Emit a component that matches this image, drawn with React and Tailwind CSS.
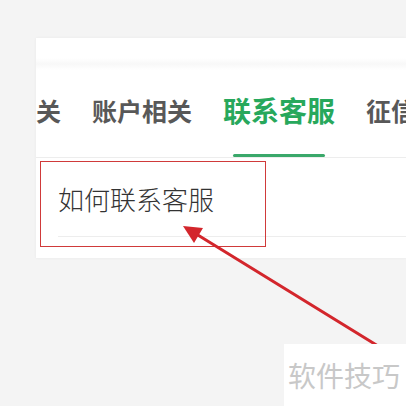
import React from 'react';

const tabs = [
  { label: '关' },
  { label: '账户相关' },
  { label: '联系客服', active: true },
  { label: '征信相关' },
];

const Tab = ({ label, active }) => (
  <div className="flex flex-col shrink-0">
    <span
      className={
        active
          ? 'text-[28px] leading-[32px] font-bold text-[#27a85c] whitespace-nowrap'
          : 'text-[25px] leading-[32px] font-semibold text-[#585858] whitespace-nowrap'
      }
    >
      {label}
    </span>
    <div className={active ? 'mt-[28px] mx-auto w-[92px] h-[3px] bg-[#3aa86a] rounded-full' : 'mt-[28px] h-[3px]'} />
  </div>
);

// annotation arrow pointing at the list item
const Arrow = () => (
  <svg className="absolute left-0 top-0 pointer-events-none" width="406" height="406" viewBox="0 0 406 406">
    <line x1="197" y1="234.5" x2="430" y2="378" stroke="#d3262c" strokeWidth="3" strokeLinecap="round" />
    <polygon points="183,226 194,243 203,228" fill="#d3262c" />
  </svg>
);

export default function App() {
  return (
    <div
      className="relative w-[406px] h-[406px] overflow-hidden bg-[#f4f4f4] pt-[38px] pl-[36px]"
      style={{ fontFamily: '"Noto Sans CJK SC", "Noto Sans", sans-serif' }}
    >
      <div className="w-[370px] h-[220px] bg-white shadow-[0_0_3px_rgba(0,0,0,0.05)] overflow-hidden flex flex-col">
        <div className="h-[20px]" />
        <div className="h-[12px] bg-linear-to-b from-white via-[#f8f8f8] to-white" />

        {/* tab strip */}
        <div className="flex gap-[31px] pt-[24px] border-b border-[#ededed]">
          {tabs.map((t) => (
            <Tab key={t.label} {...t} />
          ))}
        </div>

        {/* list */}
        <div className="pl-[22px]">
          <div className="h-[79px] flex items-center border-b border-[#ededed] pt-[4px]">
            <span className="text-[26px] leading-[32px] font-light text-[#333]">如何联系客服</span>
          </div>
        </div>
      </div>

      <div className="absolute left-[40px] top-[161px] w-[226px] h-[86px] border-[1.5px] border-[#d03a3a]" />

      <Arrow />

      <div className="absolute left-[284px] top-[344px] w-[122px] h-[62px] bg-white flex items-center pl-[4px]">
        <span className="text-[28px] leading-[32px] text-[#c8c8c8] whitespace-nowrap">软件技巧</span>
      </div>
    </div>
  );
}
